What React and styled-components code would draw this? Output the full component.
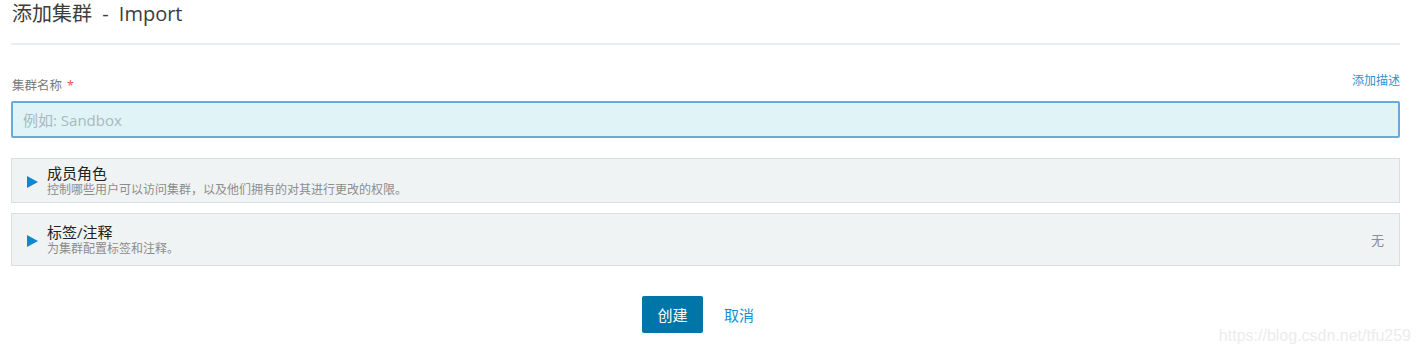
import React from "react";
import styled, { createGlobalStyle } from "styled-components";

const fontStack = `"Open Sans", "Noto Sans CJK SC", sans-serif`;

const GlobalStyle = createGlobalStyle`
  html, body {
    margin: 0;
    padding: 0;
    background: #fff;
  }
  body {
    font-family: ${fontStack};
    color: #464646;
  }
`;

const Page = styled.div`
  position: relative;
  width: 1420px;
  height: 355px;
  box-sizing: border-box;
  padding: 0 20px 0 11px;
  overflow: hidden;
`;

const Header = styled.div`
  border-bottom: 2px solid #ebeef0;
  padding: 0 0 15px 1px;
  margin-bottom: 28px;
`;

const Title = styled.h1`
  margin: 0;
  font-size: 20px;
  font-weight: 400;
  line-height: 28px;
  word-spacing: 5px;
  color: #3c3c3c;
`;

const LabelRow = styled.div`
  display: flex;
  justify-content: space-between;
  align-items: flex-start;
  height: 25px;
  margin-bottom: 3px;
`;

const Label = styled.label`
  font-size: 12.5px;
  color: #7a7a7a;
  line-height: 16px;
  margin-top: 5px;
  padding-left: 1px;
`;

const Required = styled.span`
  color: #e5534b;
  margin-left: 5px;
`;

const LinkText = styled.a`
  font-size: 12px;
  color: #2e93d1;
  line-height: 16px;
  cursor: pointer;
`;

const Input = styled.input`
  display: block;
  width: 100%;
  height: 37px;
  box-sizing: border-box;
  border: 2px solid #6aaad8;
  border-radius: 2px;
  background: #e0f3f6;
  padding: 0 10px;
  font-family: ${fontStack};
  font-size: 15px;
  color: #333;
  outline: none;
  caret-color: #222;
  &::placeholder {
    color: #a9b9bc;
  }
`;

const Section = styled.div`
  display: flex;
  align-items: center;
  height: ${(p) => p.h}px;
  box-sizing: border-box;
  margin-top: ${(p) => p.mt}px;
  background: #f0f3f4;
  border: 1px solid #dcdfe1;
  padding: 0 15px;
`;

const Arrow = styled.span`
  width: 0;
  height: 0;
  border-top: 6px solid transparent;
  border-bottom: 6px solid transparent;
  border-left: 11px solid #0f87d0;
  margin-right: 9px;
  margin-top: 2px;
`;

const SectionText = styled.div`
  flex: 1;
  display: flex;
  flex-direction: column;
`;

const SectionTitle = styled.div`
  font-size: 15px;
  color: #222;
  line-height: 18px;
`;

const SectionDesc = styled.div`
  font-size: 12px;
  color: #8c8c8c;
  line-height: 15px;
`;

const SectionStatus = styled.div`
  font-size: 13px;
  color: #8a8f93;
`;

const Footer = styled.div`
  display: flex;
  justify-content: center;
  align-items: center;
  gap: 21px;
  margin-top: 30px;
  padding-right: 15px;
`;

const PrimaryButton = styled.button`
  width: 61px;
  height: 37px;
  padding: 0;
  border: none;
  border-radius: 2px;
  background: #0075a8;
  color: #fff;
  font-family: ${fontStack};
  font-size: 15px;
  cursor: pointer;
`;

const TextButton = styled.button`
  border: none;
  background: none;
  padding: 0;
  color: #1a8dd6;
  font-family: ${fontStack};
  font-size: 15px;
  cursor: pointer;
`;

const Watermark = styled.div`
  position: absolute;
  right: 9px;
  bottom: 10px;
  font-family: "Liberation Sans", Arial, sans-serif;
  font-size: 16px;
  color: #ececec;
`;

const sections = [
  { title: "成员角色", desc: "控制哪些用户可以访问集群，以及他们拥有的对其进行更改的权限。", h: 45, mt: 20 },
  { title: "标签/注释", desc: "为集群配置标签和注释。", h: 53, mt: 10, status: "无" },
];

export default function App() {
  return (
    <>
      <GlobalStyle />
      <Page>
        <Header>
          <Title>添加集群 - Import</Title>
        </Header>
        <LabelRow>
          <Label>
            集群名称<Required>*</Required>
          </Label>
          <LinkText>添加描述</LinkText>
        </LabelRow>
        <Input placeholder="例如: Sandbox" autoFocus />
        {sections.map((s) => (
          <Section key={s.title} h={s.h} mt={s.mt}>
            <Arrow />
            <SectionText>
              <SectionTitle>{s.title}</SectionTitle>
              <SectionDesc>{s.desc}</SectionDesc>
            </SectionText>
            {s.status && <SectionStatus>{s.status}</SectionStatus>}
          </Section>
        ))}
        <Footer>
          <PrimaryButton>创建</PrimaryButton>
          <TextButton>取消</TextButton>
        </Footer>
        <Watermark>https://blog.csdn.net/tfu259</Watermark>
      </Page>
    </>
  );
}
